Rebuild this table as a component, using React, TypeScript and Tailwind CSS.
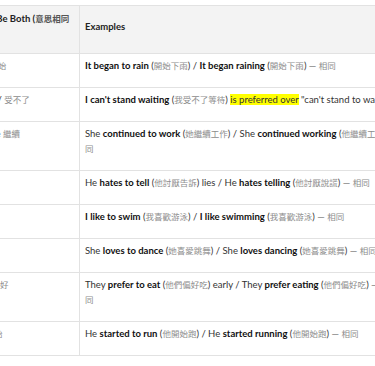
import React from 'react';

const Z = ({ children }: { children: React.ReactNode }) => (
  <span
    className="text-[#8c8c8c] text-[8.5px] leading-none font-normal"
    style={{ fontFamily: '"Noto Sans CJK TC", sans-serif' }}
  >
    {children}
  </span>
);

const B = ({ children }: { children: React.ReactNode }) => <b className="font-bold text-[#111]">{children}</b>;

const Same = ({ wrap }: { wrap?: boolean }) => (
  <>
    {' '}
    <span className="text-[#777]">—</span>{' '}
    {wrap ? (
      <>
        <Z>相</Z>
        <br />
        <Z>同</Z>
      </>
    ) : (
      <Z>相同</Z>
    )}
  </>
);

const rows: { left: React.ReactNode; ex: React.ReactNode }[] = [
  {
    left: <>begin <Z>開始</Z></>,
    ex: <><B>It began to rain</B> (<Z>開始下雨</Z>) / <B>It began raining</B> (<Z>開始下雨</Z>)<Same /></>,
  },
  {
    left: <>stand it / <Z>受不了</Z></>,
    ex: (
      <>
        <B>I can't stand waiting</B> (<Z>我受不了等待</Z>) <span className="bg-[#ffff00]">is preferred over</span> "can't stand to wait"
      </>
    ),
  },
  {
    left: <>continue <Z>繼續</Z></>,
    ex: <>She <B>continued to work</B> (<Z>她繼續工作</Z>) / She <B>continued working</B> (<Z>他繼續工作</Z>)<Same wrap /></>,
  },
  {
    left: <>hate <Z>恨</Z></>,
    ex: <>He <B>hates to tell</B> (<Z>他討厭告訴</Z>) lies / He <B>hates telling</B> (<Z>他討厭說謊</Z>)<Same /></>,
  },
  {
    left: <>like <Z>喜歡</Z></>,
    ex: <><B>I like to swim</B> (<Z>我喜歡游泳</Z>) / <B>I like swimming</B> (<Z>我喜歡游泳</Z>)<Same /></>,
  },
  {
    left: <>love <Z>愛</Z></>,
    ex: <>She <B>loves to dance</B> (<Z>她喜愛跳舞</Z>) / She <B>loves dancing</B> (<Z>她喜愛跳舞</Z>)<Same /></>,
  },
  {
    left: <>prefer <Z>偏好</Z></>,
    ex: <>They <B>prefer to eat</B> (<Z>他們偏好吃</Z>) early / They <B>prefer eating</B> (<Z>他們偏好吃</Z>)<Same wrap /></>,
  },
  {
    left: <>start <Z>開始</Z></>,
    ex: <>He <B>started to run</B> (<Z>他開始跑</Z>) / He <B>started running</B> (<Z>他開始跑</Z>)<Same /></>,
  },
];

export default function App() {
  return (
    <div
      className="w-[375px] h-[366px] overflow-hidden bg-white pt-[5px] text-[9.5px] leading-[15px] text-[#333]"
      style={{ fontFamily: 'Lato, "Noto Sans CJK TC", sans-serif' }}
    >
      <table className="table-fixed border-collapse ml-[-42px] w-[521px]">
        <colgroup>
          <col className="w-[121px]" />
          <col className="w-[400px]" />
        </colgroup>
        <thead>
          <tr className="bg-[#f3f3f3]">
            <th className="border border-[#e2e2e2] pl-[10px] pr-[5px] pt-[5px] pb-[12px] text-left align-middle font-bold text-[#222] whitespace-nowrap">
              It Can Be Both (<span className="text-[#555] text-[8.5px] leading-none">意思相同</span>
              <br />)
            </th>
            <th className="border border-[#e2e2e2] px-[5px] pt-[5px] pb-[12px] text-left align-middle font-bold text-[#222]">
              Examples
            </th>
          </tr>
        </thead>
        <tbody>
          {rows.map((r, i) => (
            <tr key={i}>
              <td className="border border-[#e2e2e2] px-[5px] pt-[4px] pb-[14px] align-top whitespace-nowrap overflow-hidden">
                {r.left}
              </td>
              <td className="border border-[#e2e2e2] px-[5px] pt-[4px] pb-[14px] align-top">{r.ex}</td>
            </tr>
          ))}
        </tbody>
      </table>
    </div>
  );
}
